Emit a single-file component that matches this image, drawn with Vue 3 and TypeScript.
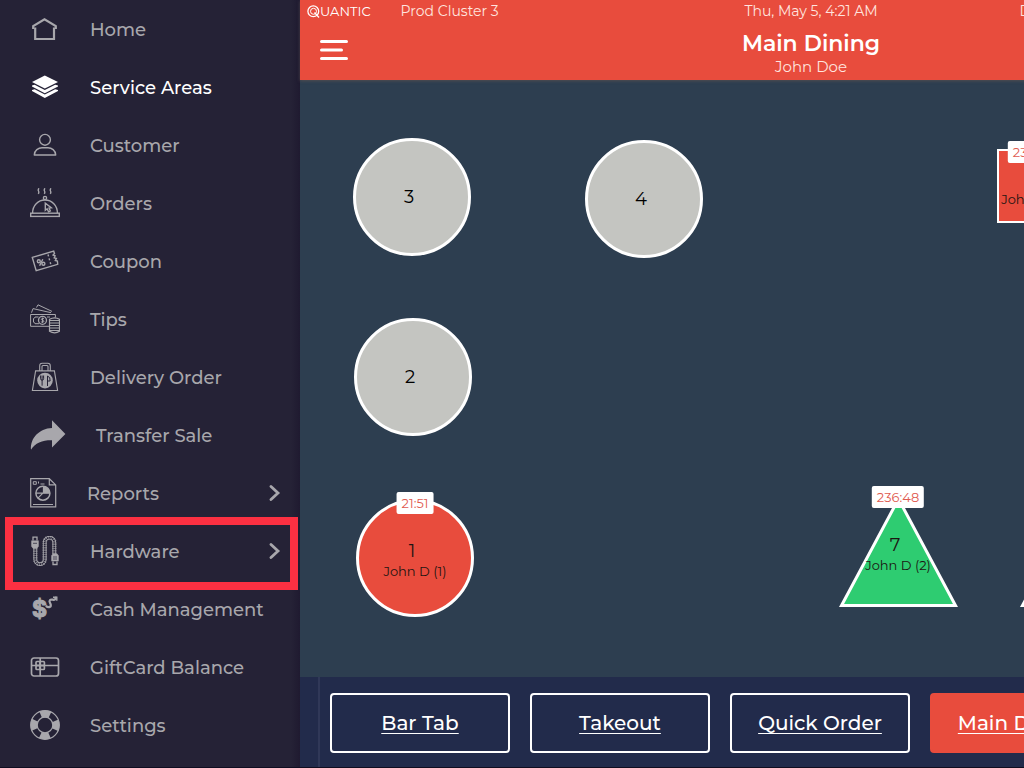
<script setup lang="ts">
import { ref } from 'vue'

interface NavItem {
  id: string
  label: string
  width?: number
  expandable?: boolean
  highlighted?: boolean
}

interface DiningTable {
  id: string
  shape: 'circle' | 'square' | 'triangle'
  status: 'free' | 'busy' | 'open'
  x: number
  y: number
  number?: string
  guest?: string
  timer?: string
}

const navItems: NavItem[] = [
  { id: 'home', label: 'Home' },
  { id: 'areas', label: 'Service Areas' },
  { id: 'customer', label: 'Customer' },
  { id: 'orders', label: 'Orders' },
  { id: 'coupon', label: 'Coupon' },
  { id: 'tips', label: 'Tips' },
  { id: 'delivery', label: 'Delivery Order' },
  { id: 'transfer', label: 'Transfer Sale', width: 36 },
  { id: 'reports', label: 'Reports', width: 27, expandable: true },
  { id: 'hardware', label: 'Hardware', expandable: true, highlighted: true },
  { id: 'cash', label: 'Cash Management' },
  { id: 'giftcard', label: 'GiftCard Balance' },
  { id: 'settings', label: 'Settings' },
]

const tables: DiningTable[] = [
  { id: 't3', shape: 'circle', status: 'free', x: 53, y: 58, number: '3' },
  { id: 't4', shape: 'circle', status: 'free', x: 285, y: 60, number: '4' },
  { id: 't2', shape: 'circle', status: 'free', x: 54, y: 238, number: '2' },
  { id: 't1', shape: 'circle', status: 'busy', x: 56, y: 419, number: '1', guest: 'John D (1)', timer: '21:51' },
  { id: 't7', shape: 'triangle', status: 'open', x: 539, y: 413, number: '7', guest: 'John D (2)', timer: '236:48' },
  { id: 'ts', shape: 'square', status: 'busy', x: 697, y: 69, guest: 'John D (2)', timer: '236:48' },
  { id: 'tt', shape: 'triangle', status: 'open', x: 720, y: 413 },
]

const areas = ['Bar Tab', 'Takeout', 'Quick Order', 'Main Dining']
const activeNav = ref('areas')
const activeArea = ref('Main Dining')
</script>

<template>
  <div class="shell">
    <nav class="sidebar" aria-label="Main menu">
      <ul class="nav-list">
        <li v-for="item in navItems" :key="item.id" class="nav-row" :class="{ highlighted: item.highlighted }">
          <a href="#" class="nav-link" :class="{ active: item.id === activeNav }" @click.prevent="activeNav = item.id">
            <svg class="nav-icon" :width="item.width ?? 30" height="30" :viewBox="`0 0 ${item.width ?? 30} 30`" fill="none" stroke="currentColor" aria-hidden="true">
              <g v-if="item.id === 'home'" stroke-width="2.2">
                <path d="M3.200 15V12L14.500 5.200 25.800 12v3" />
                <path d="M5.200 13.500V25h18.800V13.500" />
              </g>
              <g v-else-if="item.id === 'areas'" fill="currentColor" stroke="none">
                <path d="M14.800 3.400 28 10 14.800 16.500 2 10z" />
                <path d="M2 13.400 4.600 12.700 14.800 18 25.200 12.700 28 13.400v1L14.800 21.300 2 14.400z" />
                <path d="M2 18 4.600 17.300 14.800 22.600 25.200 17.300 28 18v1L14.800 26 2 19z" />
              </g>
              <g v-else-if="item.id === 'customer'" stroke-width="1.400">
                <circle cx="15" cy="9.800" r="5.400" />
                <path d="M4.300 25C4.300 20.300 8.500 17.700 12 17.700h6c3.500 0 7.700 2.600 7.700 7.300z" stroke-linejoin="round" />
              </g>
              <g v-else-if="item.id === 'orders'" stroke-width="1.400">
                <path d="M9 .3q-1.200 1.500-.5 2.700t-.2 2.800M15 .3q-1.200 1.500-.5 2.700t-.2 2.800M21 .3q-1.200 1.500-.5 2.700t-.2 2.800" />
                <circle cx="15" cy="10" r="1.600" />
                <path d="M2.600 25C2.600 17.500 8 12 15 12s12.400 5.500 12.400 13" />
                <rect x=".7" y="25.200" width="28.600" height="3.200" />
                <path d="M15.300 15.200v7l1.800-1.400 1.500 3 1.700-.8-1.300-2.900 2.300-.3z" />
              </g>
              <g v-else-if="item.id === 'coupon'" stroke-width="1.400">
                <path d="M2.300 11.400 23.700 5.200l.8 2.400-1.400 1.400 2 .9-.9 1.900 2.200.7-1.100 2 2.100.6.3 3.200L6.200 24.600z" />
                <path d="M18 8.500l3.400 12" stroke-dasharray="2 2" />
                <path d="M12.800 13.200l-3.200 6.600" />
                <circle cx="8.800" cy="15.200" r="1.500" />
                <circle cx="13.400" cy="17.700" r="1.500" />
              </g>
              <g v-else-if="item.id === 'tips'" stroke-width="1">
                <path d="M1.500 8.700 3 4.600 21 8.700M6.500 3.500 8 .8 22 7.400M.600 10.500H25.400v3M19 22.300H.6V10.500" />
                <circle cx="12.500" cy="16.300" r="4" stroke-width="1.300" />
                <path d="M8.500 13H5q0 1.200-1.500 1.500v3.700q1.500.3 1.500 1.500h4M17 13h3M14 14.700q-2.800-.8-2.700.6c.1 1.200 2.500.7 2.600 1.900.1 1.300-2.100 1.200-3 .5M12.500 13.600v5.300" />
                <path d="M19.500 15.300q5.200-3 10 0v12q-4.800 3-10 0zM19.500 16.500h10M19.500 19h10M19.500 21.500h10M19.500 24h10M19.500 26.500h10" stroke-width="1.200" />
              </g>
              <g v-else-if="item.id === 'delivery'" stroke-width="1.100">
                <path d="M9.700 9V4q0-2.700 2.500-2.700h5.600q2.500 0 2.500 2.700v5M12 9V4.500q0-1 1-1h4q1 0 1 1V9" />
                <path d="M5.600 8.900h18.800l3.200 19.600H2.400z" />
                <circle cx="15" cy="18.600" r="7.800" fill="currentColor" stroke="none" />
                <path class="icon-cut" d="M10.600 13.500v3.200q0 1.500 1.500 1.500t1.500-1.500v-3.200M12.100 13.500v10.200M17.500 24v-10q3.200 1 2.600 5h-2.600" stroke-width="1" />
              </g>
              <path v-else-if="item.id === 'transfer'" fill="currentColor" stroke="none" d="M22 .2 35.400 14 22 27.400v-7.200C13 20 5 22.500 1 29.800 0 18.500 9 8.500 22 8z" />
              <g v-else-if="item.id === 'reports'" stroke-width="1.200">
                <path d="M.7.700h18.600l6.400 6.200v22H.7zM19.300.7v6.200h6.400M3 26.500h20" />
                <path d="M3.300 3.700h3v2.600h-3zM8.500 3.500v2M10.500 6h4" stroke-width="1" />
                <circle cx="12.900" cy="15.200" r="7" stroke-width="1.500" />
                <path d="M12.900 15.200V8.200a7 7 0 0 1 7 7z" fill="currentColor" stroke="none" />
                <path d="M5.900 15.200h7M12.900 15.200l-5 5M12.900 15.200h7" />
              </g>
              <g v-else-if="item.id === 'hardware'">
                <path d="M5.300 12v11.400a4.700 4.700 0 0 0 9.400 0V6.500a4.800 4.800 0 0 1 9.600 0V18" stroke-width="3.800" />
                <path class="icon-cut" d="M5.300 12v11.400a4.700 4.700 0 0 0 9.400 0V6.500a4.800 4.800 0 0 1 9.600 0V18" stroke-width="1.900" />
                <path d="M5.300 12v11.400a4.700 4.700 0 0 0 9.400 0V6.500a4.800 4.800 0 0 1 9.600 0V18" stroke-width="4.400" stroke-dasharray=".5 1.300" />
                <path d="M1.300 4.600h7.400v5.800L7 12.500H3L1.300 10.400zM21.300 25.300h7.400v-5.800L27 17.400h-4l-1.700 2.100z" fill="currentColor" stroke="none" />
                <path d="M3 4.500V1.200h4v3.300M23 25.500v3h4v-3" stroke-width="1.300" />
                <path class="icon-cut" d="M3 7.300h4M23 21h4M23 23h4" stroke-width=".7" />
              </g>
              <g v-else-if="item.id === 'cash'">
                <text class="cash-sign" x="2" y="23">$</text>
                <path d="M15.800 11.800c2.400 2 5.200 1.600 5-.8-.2-2-2.400-3.300-.8-5 1.500-1.300 3.600.6 5-.6.900-.8 0-1.700 1.500-2.200" stroke-width="2.200" />
                <path d="M23 3.200h3.800v3.600" stroke-width="1.400" />
              </g>
              <g v-else-if="item.id === 'giftcard'" stroke-width="1.700">
                <rect x="1.500" y="6" width="27" height="18" rx="2.500" />
                <path d="M10.200 6v18M1.500 13.500h27" />
                <rect x="6" y="9.500" width="4.200" height="4" rx="1" />
                <rect x="10.200" y="9.500" width="4.200" height="4" rx="1" />
                <rect x="6" y="13.500" width="4.200" height="4" rx="1" />
                <rect x="10.200" y="13.500" width="4.200" height="4" rx="1" />
              </g>
              <g v-else>
                <circle cx="15" cy="15" r="14.300" stroke-width="1.200" />
                <circle cx="15" cy="15" r="7.800" stroke-width="1.200" />
                <circle cx="15" cy="15" r="11" stroke-width="6.800" stroke-dasharray="9.300 7.980" stroke-dashoffset="4.650" />
              </g>
            </svg>
            <span class="nav-label">{{ item.label }}</span>
            <svg v-if="item.expandable" class="chevron" width="12" height="16" viewBox="0 0 12 16" fill="none" stroke="currentColor" stroke-width="2.800" aria-hidden="true">
              <path d="M2 1.500 9 8l-7 6.500" stroke-linecap="round" />
            </svg>
          </a>
        </li>
      </ul>
    </nav>

    <main class="workspace">
      <header class="topbar">
        <div class="status">
          <div class="status-left">
            <span class="brand">
              <svg width="13" height="13" viewBox="0 0 13 13" fill="none" stroke="currentColor" aria-hidden="true">
                <circle cx="6.300" cy="6.300" r="5.400" stroke-width="1.300" />
                <circle cx="6.500" cy="6.300" r="3" stroke-width="1" />
                <path d="M7.500 7.500l4.500 5" stroke-width="1.300" />
              </svg>
              <span>UANTIC</span>
            </span>
            <span>Prod Cluster 3</span>
          </div>
          <time>Thu, May 5, 4:21 AM</time>
          <span class="status-right">D</span>
        </div>
        <div class="title-row">
          <button class="menu" type="button" aria-label="Menu">
            <svg width="28" height="22" viewBox="0 0 28 22" fill="none" stroke="currentColor" stroke-width="3" stroke-linecap="round">
              <path d="M1.500 2.500h25M1.500 11h20M1.500 19.500h25" />
            </svg>
          </button>
          <div class="heading">
            <h1>Main Dining</h1>
            <p>John Doe</p>
          </div>
        </div>
      </header>

      <section class="floor" aria-label="Floor plan">
        <button
          v-for="table in tables"
          :key="table.id"
          type="button"
          class="table"
          :class="[table.shape, table.status, { occupied: table.guest }]"
          :style="{ left: `${table.x}px`, top: `${table.y}px` }"
        >
          <svg v-if="table.shape === 'triangle'" class="outline" viewBox="0 0 118 114" aria-hidden="true">
            <path d="M59.500 6 116.500 112.500H2.500z" />
          </svg>
          <span v-if="table.timer" class="timer">{{ table.timer }}</span>
          <span class="number">{{ table.number }}</span>
          <span v-if="table.guest" class="guest">{{ table.guest }}</span>
        </button>
      </section>

      <footer class="areas">
        <a
          v-for="area in areas"
          :key="area"
          href="#"
          class="area"
          :class="{ current: area === activeArea }"
          @click.prevent="activeArea = area"
        >{{ area }}</a>
      </footer>
    </main>
  </div>
</template>

<style>
body {
  margin: 0;
  overflow-x: hidden;
}
</style>

<style scoped>
.shell {
  display: flex;
  box-sizing: border-box;
  min-height: 100vh;
  overflow: hidden;
  border-bottom: 1px solid #0f0d20;
  background: #252236;
  font-family: Montserrat, Inter, "Liberation Sans", sans-serif;
}

.sidebar {
  position: relative;
  z-index: 1;
  flex: 0 0 300px;
  background: linear-gradient(90deg, #252236 97%, #1f1a30);
  color: #a8a7ac;
}

.nav-list {
  margin: 0;
  padding: 0;
  list-style: none;
}

.nav-row {
  position: relative;
}

.nav-row.highlighted::after {
  content: "";
  position: absolute;
  inset: -5px 2px -10px 5px;
  border: 8px solid #fc3042;
  pointer-events: none;
}

.nav-link {
  display: flex;
  align-items: center;
  gap: 30px;
  height: 58px;
  padding: 0 19px 0 30px;
  color: inherit;
  font-size: 18px;
  font-weight: 500;
  text-decoration: none;
}

.nav-link.active {
  color: #fff;
}

.nav-icon {
  flex: none;
}

.nav-label {
  flex: 1;
  padding-top: 2px;
  white-space: nowrap;
}

.chevron {
  flex: none;
}

.icon-cut {
  stroke: #252236;
}

.cash-sign {
  fill: currentColor;
  stroke: currentColor;
  font: bold 23px Inter, sans-serif;
}

.workspace {
  display: flex;
  flex: 0 0 calc(100vw - 2px);
  flex-direction: column;
  background: #2d3e50;
}

.topbar {
  z-index: 1;
  height: 80px;
  background: #e84c3d;
  box-shadow: 0 1px 3px rgba(90, 80, 80, 0.8);
  color: #ffe4df;
}

.status {
  display: grid;
  grid-template-columns: 1fr auto 1fr;
  align-items: center;
  height: 22px;
  padding: 0 7px;
  font-size: 14px;
}

.status-left {
  display: flex;
  align-items: center;
  gap: 30px;
}

.brand {
  display: flex;
  align-items: center;
  color: #fff;
  font-size: 13px;
}

.status-right {
  padding-left: 142px;
}

.title-row {
  display: grid;
  grid-template-columns: 48px 1fr 48px;
  padding: 0 16px;
}

.menu {
  display: flex;
  align-items: center;
  justify-content: center;
  width: 36px;
  height: 56px;
  padding: 0;
  border: 0;
  background: none;
  color: #fff;
}

.heading {
  padding-top: 8px;
  text-align: center;
}

.heading h1 {
  margin: 0;
  color: #fff;
  font-size: 22px;
  font-weight: 600;
  line-height: 28px;
}

.heading p {
  margin: 0;
  font-size: 15px;
  line-height: 18px;
}

.floor {
  position: relative;
  flex: 1;
  min-height: 560px;
}

.table {
  position: absolute;
  display: flex;
  box-sizing: border-box;
  flex-direction: column;
  align-items: center;
  justify-content: center;
  width: 118px;
  height: 118px;
  padding: 0;
  border: 3px solid #fff;
  color: #000;
  font-family: inherit;
}

.table.circle {
  border-radius: 50%;
}

.table.square {
  width: 74px;
  height: 74px;
  border-width: 2px;
}

.table.triangle {
  height: 114px;
  border: 0;
  background: none;
}

.table.occupied {
  padding-top: 4px;
  color: #1d1512;
}

.table.triangle.occupied {
  padding-top: 8px;
}

.free {
  background: #c4c5c1;
}

.busy {
  background: #e84c3d;
}

.outline {
  position: absolute;
  inset: 0;
  overflow: visible;
  fill: #2ecc71;
  stroke: #fff;
  stroke-width: 3;
}

.timer {
  position: absolute;
  top: -10px;
  left: 50%;
  padding: 0 5px;
  border-radius: 2px;
  background: #fff;
  color: #df5a50;
  font-size: 13px;
  line-height: 22px;
  transform: translateX(-50%);
}

.triangle .timer {
  top: -7px;
}

.number {
  position: relative;
  min-height: 22px;
  padding-right: 6px;
  font-size: 18px;
  line-height: 22px;
}

.guest {
  position: relative;
  font-size: 13px;
  line-height: 18px;
  white-space: nowrap;
}

.areas {
  display: flex;
  box-sizing: border-box;
  gap: 20px;
  height: 90px;
  margin-left: 18px;
  padding: 16px 10px 14px;
  border-left: 2px solid #303858;
  background: #222b4b;
  box-shadow: -18px 0 #222b4b;
}

.area {
  display: flex;
  box-sizing: border-box;
  flex: 0 0 180px;
  align-items: center;
  justify-content: center;
  height: 60px;
  border: 2px solid #fff;
  border-radius: 4px;
  color: #fff;
  font-size: 20px;
  font-weight: 500;
  text-decoration-thickness: 1px;
  text-underline-offset: 3px;
}

.area.current {
  border-color: #e84c3d;
  background: #e84c3d;
}
</style>
